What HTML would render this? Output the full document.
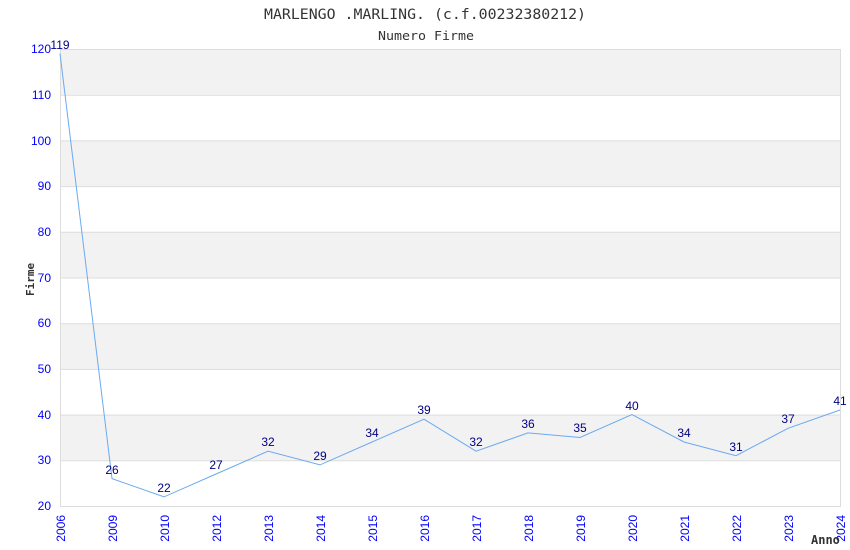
<!DOCTYPE html>
<html><head><meta charset="utf-8"><style>html,body{margin:0;padding:0;background:#fff}svg{display:block}</style></head><body>
<svg width="850" height="550" xmlns="http://www.w3.org/2000/svg">
<rect width="850" height="550" fill="#fff"/>
<text x="425" y="19" text-anchor="middle" font-family="DejaVu Sans Mono, monospace" font-size="14" fill="#333" textLength="322" lengthAdjust="spacingAndGlyphs">MARLENGO .MARLING. (c.f.00232380212)</text>
<text x="426" y="40" text-anchor="middle" font-family="DejaVu Sans Mono, monospace" font-size="12" fill="#333" textLength="96" lengthAdjust="spacingAndGlyphs">Numero Firme</text>
<g fill="#f2f2f2">
<rect x="60.5" y="49" width="780" height="45.7"/>
<rect x="60.5" y="140.4" width="780" height="45.7"/>
<rect x="60.5" y="231.8" width="780" height="45.7"/>
<rect x="60.5" y="323.2" width="780" height="45.7"/>
<rect x="60.5" y="414.6" width="780" height="45.7"/>
</g>
<g stroke="#ddd" stroke-width="1">
<line x1="60" x2="840" y1="49.5" y2="49.5"/><line x1="60" x2="840" y1="95.2" y2="95.2"/><line x1="60" x2="840" y1="140.9" y2="140.9"/><line x1="60" x2="840" y1="186.6" y2="186.6"/><line x1="60" x2="840" y1="232.3" y2="232.3"/><line x1="60" x2="840" y1="278" y2="278"/><line x1="60" x2="840" y1="323.7" y2="323.7"/><line x1="60" x2="840" y1="369.4" y2="369.4"/><line x1="60" x2="840" y1="415.1" y2="415.1"/><line x1="60" x2="840" y1="460.8" y2="460.8"/><line x1="60" x2="840" y1="506.5" y2="506.5"/>
<line x1="60.5" x2="60.5" y1="49" y2="507"/><line x1="840.5" x2="840.5" y1="49" y2="507"/>
</g>
<g font-family="Liberation Sans, sans-serif" font-size="12" fill="#00f" text-anchor="end">
<text x="51" y="53">120</text><text x="51" y="99">110</text><text x="51" y="145">100</text><text x="51" y="190">90</text><text x="51" y="236">80</text><text x="51" y="282">70</text><text x="51" y="327">60</text><text x="51" y="373">50</text><text x="51" y="419">40</text><text x="51" y="464">30</text><text x="51" y="510">20</text>
</g>
<g font-family="Liberation Sans, sans-serif" font-size="12" fill="#00f" text-anchor="end">
<text transform="translate(65,515) rotate(-90)">2006</text>
<text transform="translate(117,515) rotate(-90)">2009</text>
<text transform="translate(169,515) rotate(-90)">2010</text>
<text transform="translate(221,515) rotate(-90)">2012</text>
<text transform="translate(273,515) rotate(-90)">2013</text>
<text transform="translate(325,515) rotate(-90)">2014</text>
<text transform="translate(377,515) rotate(-90)">2015</text>
<text transform="translate(429,515) rotate(-90)">2016</text>
<text transform="translate(481,515) rotate(-90)">2017</text>
<text transform="translate(533,515) rotate(-90)">2018</text>
<text transform="translate(585,515) rotate(-90)">2019</text>
<text transform="translate(637,515) rotate(-90)">2020</text>
<text transform="translate(689,515) rotate(-90)">2021</text>
<text transform="translate(741,515) rotate(-90)">2022</text>
<text transform="translate(793,515) rotate(-90)">2023</text>
<text transform="translate(845,515) rotate(-90)">2024</text>
</g>
<text transform="translate(34,296) rotate(-90)" font-family="DejaVu Sans Mono, monospace" font-weight="bold" font-size="11" fill="#333">Firme</text>
<text x="811" y="544" font-family="DejaVu Sans Mono, monospace" font-weight="bold" font-size="12" fill="#333">Anno</text>
<polyline fill="none" stroke="#6aaaf0" stroke-width="1" points="60,53.6 112,478.6 164,496.9 216,474 268,451.2 320,464.9 372,442 424,419.2 476,451.2 528,432.9 580,437.5 632,414.6 684,442 736,455.7 788,428.3 840,410"/>
<g font-family="Liberation Sans, sans-serif" font-size="12" fill="#000080" text-anchor="middle">
<text x="60" y="49">119</text><text x="112" y="474">26</text><text x="164" y="492">22</text><text x="216" y="469">27</text><text x="268" y="446">32</text><text x="320" y="460">29</text><text x="372" y="437">34</text><text x="424" y="414">39</text><text x="476" y="446">32</text><text x="528" y="428">36</text><text x="580" y="432">35</text><text x="632" y="410">40</text><text x="684" y="437">34</text><text x="736" y="451">31</text><text x="788" y="423">37</text><text x="840" y="405">41</text>
</g>
</svg>
</body></html>
